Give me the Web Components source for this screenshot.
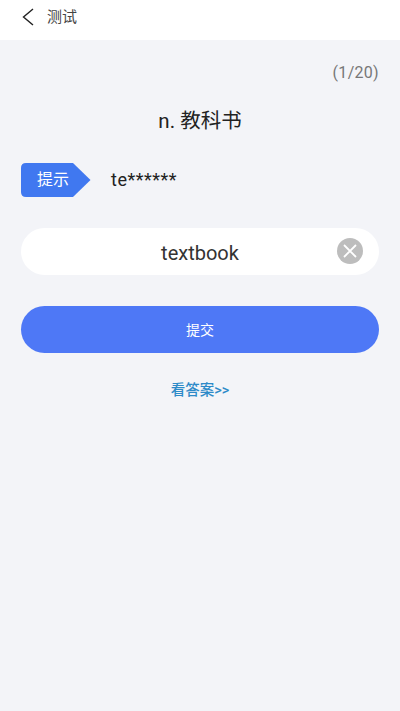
<!DOCTYPE html>
<html lang="zh">
<head>
<meta charset="utf-8">
<style>
  html, body { margin: 0; height: 100%; background: #f3f4f8; }
  body { font-family: Roboto, "Noto Sans CJK SC", sans-serif; }
</style>
</head>
<body>
<quiz-page>
  <quiz-header>测试</quiz-header>
  <quiz-progress>(1/20)</quiz-progress>
  <quiz-word>n. 教科书</quiz-word>
  <quiz-hint label="提示">te******</quiz-hint>
  <quiz-input value="textbook"></quiz-input>
  <quiz-submit>提交</quiz-submit>
  <quiz-answer>看答案&gt;&gt;</quiz-answer>
</quiz-page>
<script>
(function () {
  "use strict";

  const FONT = 'Roboto, "Noto Sans CJK SC", sans-serif';

  function define(name, html, render) {
    customElements.define(name, class extends HTMLElement {
      connectedCallback() {
        if (this.shadowRoot) return;
        const root = this.attachShadow({ mode: "open" });
        root.innerHTML = html;
        if (render) render(this, root);
      }
    });
  }

  define("quiz-page", `
    <style>
      :host { display: flex; flex-direction: column; width: 400px; min-height: 711px; background: #f3f4f8; font-family: ${FONT}; }
    </style>
    <slot></slot>`);

  define("quiz-header", `
    <style>
      :host { display: flex; align-items: center; box-sizing: border-box; height: 40px; padding: 0 0 6px 22px; background: #fff; }
      svg { width: 12px; height: 18px; margin-right: 13px; }
      span { font-size: 15px; line-height: 20px; color: #444; }
    </style>
    <svg viewBox="0 0 12 18" aria-hidden="true"><path d="M11 1 L1.5 9 L11 17" fill="none" stroke="#222" stroke-width="1.4"/></svg>
    <span><slot></slot></span>`);

  define("quiz-progress", `
    <style>
      :host { display: block; margin-top: 23px; padding-right: 21px; text-align: right; font-size: 16px; letter-spacing: 0.3px; line-height: 20px; color: #777; }
    </style>
    <slot></slot>`);

  define("quiz-word", `
    <style>
      :host { display: block; margin-top: 24px; text-align: center; font-size: 20.5px; line-height: 28px; color: #222; }
    </style>
    <slot></slot>`);

  define("quiz-hint", `
    <style>
      :host { display: flex; align-items: center; margin: 28px 0 0 21px; height: 34px; }
      .tag { width: 70px; height: 34px; flex: none; position: relative; }
      svg { display: block; }
      .label { position: absolute; left: 0; top: 0; width: 64px; line-height: 33px; text-align: center; font-size: 16px; color: #fff; }
      .text { margin-left: 20px; font-size: 18px; letter-spacing: 0.5px; line-height: 24px; color: #222; }
    </style>
    <div class="tag">
      <svg width="70" height="34" viewBox="0 0 70 34" aria-hidden="true"><path d="M5 0 H52 L69.5 17 L52 34 H5 Q0 34 0 29 V5 Q0 0 5 0 Z" fill="#4078f0"/></svg>
      <span class="label"></span>
    </div>
    <span class="text"><slot></slot></span>`, (el, root) => {
      root.querySelector(".label").textContent = el.getAttribute("label");
    });

  define("quiz-input", `
    <style>
      :host { display: block; margin: 31px 21px 0; }
      .box { display: flex; align-items: center; height: 47px; border-radius: 24px; background: #fff; position: relative; }
      .value { flex: 1; text-align: center; font-size: 20px; color: #333; position: relative; top: 1px; }
      .clear { position: absolute; right: 16px; top: 10px; width: 26px; height: 26px; }
    </style>
    <div class="box">
      <span class="value"></span>
      <svg class="clear" viewBox="0 0 26 26" aria-hidden="true">
        <circle cx="13" cy="13" r="13" fill="#bdbdbd"/>
        <path d="M7 7 L19 19 M19 7 L7 19" stroke="#fff" stroke-width="1.8" fill="none"/>
      </svg>
    </div>`, (el, root) => {
      root.querySelector(".value").textContent = el.getAttribute("value");
    });

  define("quiz-submit", `
    <style>
      :host { display: flex; align-items: center; justify-content: center; margin: 31px 21px 0; height: 47px; border-radius: 24px; background: #4e78f6; color: #fff; font-size: 14px; padding-bottom: 1px; box-sizing: border-box; }
    </style>
    <slot></slot>`);

  define("quiz-answer", `
    <style>
      :host { display: block; margin-top: 28px; text-align: center; font-size: 14.5px; line-height: 20px; font-weight: 500; color: #2d8ac8; }
    </style>
    <slot></slot>`);
})();
</script>
</body>
</html>
